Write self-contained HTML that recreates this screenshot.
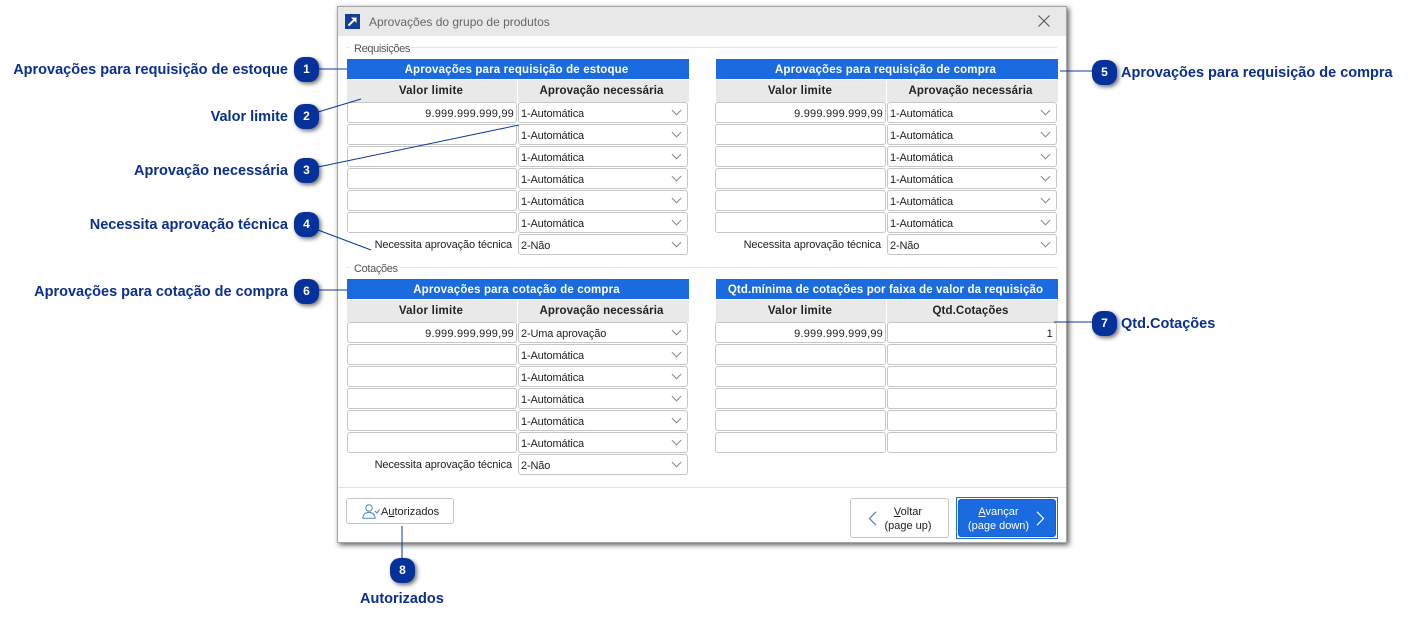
<!DOCTYPE html>
<html><head><meta charset="utf-8"><style>
html,body{margin:0;padding:0;background:#fff}
body{width:1409px;height:624px;position:relative;overflow:hidden;font-family:"Liberation Sans",sans-serif;font-size:11px;color:#222}
div,span.a{position:absolute;box-sizing:border-box}
#dlg{left:337px;top:6px;width:730px;height:537px;background:#fff;border:1px solid #a5a5a5;box-shadow:2px 2px 5px rgba(0,0,0,.65)}
.blue{background:#1a6ae0;color:#fff;font-weight:bold;text-align:center;height:20px;line-height:22px;width:342px;font-size:11.5px;letter-spacing:.16px;padding-right:3px}
.ch{background:#e9e9e9;font-weight:bold;text-align:center;height:22px;line-height:23px;color:#222;font-size:11.5px;letter-spacing:.1px}
.ch.c2{padding-right:4px}
.ch.v{letter-spacing:.25px;padding-right:2px}
.i,.s{height:21px;border:1px solid #c6c6c6;border-radius:3px;background:#fff;line-height:22px;white-space:nowrap}
.i{width:170px;text-align:right;padding-right:2px;letter-spacing:.2px}
.i.w{left:715px;width:171px}
.s{width:170px;padding-left:2px;letter-spacing:-.15px}
.s:after{content:"";position:absolute;right:7px;top:4px;width:6px;height:6px;border-right:1px solid #888;border-bottom:1px solid #888;transform:rotate(45deg)}
.lb{text-align:right;width:170px;height:21px;line-height:23px;padding-right:5px;white-space:nowrap;letter-spacing:-.12px}
.g{color:#555;background:#fff;padding:0 1px 0 4px;height:14px;line-height:16px;letter-spacing:-.35px}
.hr{height:1px;background:#e4e4e4}
.b{width:25px;height:25px;background:#04319a;border-radius:10px;color:#fff;font-weight:bold;font-size:12px;line-height:25px;text-align:center;box-shadow:2px 2px 4px rgba(0,0,0,.55)}
.t{color:#0b2f8f;font-weight:bold;font-size:14.5px;line-height:18px;height:18px;white-space:nowrap}
.r{right:1121px;text-align:right}
.btn{border:1px solid #c4c4c4;border-radius:3px;background:#fff;text-align:center;color:#222;font-size:11px}
u{text-decoration:underline}
</style></head><body>

<div id="dlg"></div>
<div style="left:338px;top:7px;width:728px;height:29px;background:#e8e8e8"></div>
<svg style="position:absolute;left:345px;top:14px" width="15" height="15" viewBox="0 0 15 15"><rect width="15" height="15" fill="#0f3f96"/><path d="M3.5 11.5 L10 5" stroke="#fff" stroke-width="2" fill="none"/><path d="M6 3.5 H11.5 V9 Z" fill="#fff"/></svg>
<div style="left:369px;top:14px;height:16px;line-height:17px;font-size:12px;color:#666;white-space:nowrap">Aprovações do grupo de produtos</div>
<svg style="position:absolute;left:1038px;top:15px" width="12" height="12" viewBox="0 0 12 12"><path d="M.5 .5 L11.5 11.5 M11.5 .5 L.5 11.5" stroke="#555" stroke-width="1.1" fill="none"/></svg>

<!-- Requisições -->
<div class="hr" style="left:347px;top:47px;width:710px"></div>
<div class="g" style="left:350px;top:41px">Requisições</div>

<div class="blue" style="left:347px;top:59px">Aprovações para requisição de estoque</div>
<div class="ch v" style="left:347px;top:80px;width:170px">Valor limite</div>
<div class="ch c2" style="left:518px;top:80px;width:171px">Aprovação necessária</div>
<div class="i" style="left:347px;top:102px">9.999.999.999,99</div><div class="s" style="left:518px;top:102px">1-Automática</div>
<div class="i" style="left:347px;top:124px"></div><div class="s" style="left:518px;top:124px">1-Automática</div>
<div class="i" style="left:347px;top:146px"></div><div class="s" style="left:518px;top:146px">1-Automática</div>
<div class="i" style="left:347px;top:168px"></div><div class="s" style="left:518px;top:168px">1-Automática</div>
<div class="i" style="left:347px;top:190px"></div><div class="s" style="left:518px;top:190px">1-Automática</div>
<div class="i" style="left:347px;top:212px"></div><div class="s" style="left:518px;top:212px">1-Automática</div>
<div class="lb" style="left:347px;top:234px">Necessita aprovação técnica</div><div class="s" style="left:518px;top:234px">2-Não</div>

<div class="blue" style="left:716px;top:59px">Aprovações para requisição de compra</div>
<div class="ch v" style="left:716px;top:80px;width:170px">Valor limite</div>
<div class="ch c2" style="left:887px;top:80px;width:171px">Aprovação necessária</div>
<div class="i w" style="top:102px">9.999.999.999,99</div><div class="s" style="left:887px;top:102px">1-Automática</div>
<div class="i w" style="top:124px"></div><div class="s" style="left:887px;top:124px">1-Automática</div>
<div class="i w" style="top:146px"></div><div class="s" style="left:887px;top:146px">1-Automática</div>
<div class="i w" style="top:168px"></div><div class="s" style="left:887px;top:168px">1-Automática</div>
<div class="i w" style="top:190px"></div><div class="s" style="left:887px;top:190px">1-Automática</div>
<div class="i w" style="top:212px"></div><div class="s" style="left:887px;top:212px">1-Automática</div>
<div class="lb" style="left:716px;top:234px">Necessita aprovação técnica</div><div class="s" style="left:887px;top:234px">2-Não</div>

<!-- Cotações -->
<div class="hr" style="left:347px;top:267px;width:710px"></div>
<div class="g" style="left:350px;top:261px">Cotações</div>

<div class="blue" style="left:347px;top:279px">Aprovações para cotação de compra</div>
<div class="ch v" style="left:347px;top:300px;width:170px">Valor limite</div>
<div class="ch c2" style="left:518px;top:300px;width:171px">Aprovação necessária</div>
<div class="i" style="left:347px;top:322px">9.999.999.999,99</div><div class="s" style="left:518px;top:322px">2-Uma aprovação</div>
<div class="i" style="left:347px;top:344px"></div><div class="s" style="left:518px;top:344px">1-Automática</div>
<div class="i" style="left:347px;top:366px"></div><div class="s" style="left:518px;top:366px">1-Automática</div>
<div class="i" style="left:347px;top:388px"></div><div class="s" style="left:518px;top:388px">1-Automática</div>
<div class="i" style="left:347px;top:410px"></div><div class="s" style="left:518px;top:410px">1-Automática</div>
<div class="i" style="left:347px;top:432px"></div><div class="s" style="left:518px;top:432px">1-Automática</div>
<div class="lb" style="left:347px;top:454px">Necessita aprovação técnica</div><div class="s" style="left:518px;top:454px">2-Não</div>

<div class="blue" style="left:716px;top:279px;letter-spacing:.12px">Qtd.mínima de cotações por faixa de valor da requisição</div>
<div class="ch v" style="left:716px;top:300px;width:170px">Valor limite</div>
<div class="ch c2" style="left:887px;top:300px;width:171px">Qtd.Cotações</div>
<div class="i w" style="top:322px">9.999.999.999,99</div><div class="i" style="left:887px;top:322px;padding-right:3px">1</div>
<div class="i w" style="top:344px"></div><div class="i" style="left:887px;top:344px"></div>
<div class="i w" style="top:366px"></div><div class="i" style="left:887px;top:366px"></div>
<div class="i w" style="top:388px"></div><div class="i" style="left:887px;top:388px"></div>
<div class="i w" style="top:410px"></div><div class="i" style="left:887px;top:410px"></div>
<div class="i w" style="top:432px"></div><div class="i" style="left:887px;top:432px"></div>

<!-- Footer -->
<div class="hr" style="left:338px;top:487px;width:728px"></div>
<div class="btn" style="left:346px;top:498px;width:108px;height:26px;line-height:26px;padding-left:34px;text-align:left">A<u>u</u>torizados</div>
<svg style="position:absolute;left:362px;top:504px" width="18" height="15" viewBox="0 0 18 15"><circle cx="7" cy="4" r="3.2" fill="none" stroke="#4a86dc" stroke-width="1"/><path d="M.8 14.2 C1 10 4 8.4 7 8.4 C10 8.4 12.6 10 13.2 14.2 Z" fill="none" stroke="#4a86dc" stroke-width="1"/><path d="M13 7 L14.8 9 L17.6 5.6" fill="none" stroke="#777" stroke-width="1"/></svg>

<div class="btn" style="left:850px;top:498px;width:99px;height:40px;padding:6px 0 0 17px;line-height:14px"><u>V</u>oltar<br>(page up)</div>
<svg style="position:absolute;left:868px;top:511px" width="10" height="15" viewBox="0 0 10 15"><path d="M8 .8 L1.5 7.5 L8 14.2" fill="none" stroke="#3f80df" stroke-width="1.2"/></svg>

<div style="left:956px;top:497px;width:102px;height:42px;border:1px solid #1a6ae0;background:#fff"></div>
<div class="btn" style="left:958px;top:499px;width:98px;height:38px;background:#1a6ae0;border-color:#1a5cc0;color:#fff;padding:5px 17px 0 0;line-height:14px"><u>A</u>vançar<br>(page down)</div>
<svg style="position:absolute;left:1035px;top:511px" width="10" height="15" viewBox="0 0 10 15"><path d="M2 .8 L8.5 7.5 L2 14.2" fill="none" stroke="#fff" stroke-width="1.2"/></svg>

<!-- Leader lines -->
<svg style="position:absolute;left:0;top:0" width="1409" height="624" viewBox="0 0 1409 624">
<g stroke="#0a3a9c" stroke-width="1" fill="none">
<path d="M318 69H347"/><path d="M318 112L361 99"/><path d="M318 167L519 125"/><path d="M318 230L371 250"/>
<path d="M1060 71H1092"/><path d="M318 290H347"/><path d="M1054 322H1092"/><path d="M402 526V558"/>
</g></svg>

<!-- Callouts -->
<div class="b" style="left:294px;top:57px">1</div>
<div class="b" style="left:294px;top:104px">2</div>
<div class="b" style="left:294px;top:158px">3</div>
<div class="b" style="left:294px;top:212px">4</div>
<div class="b" style="left:1092px;top:60px">5</div>
<div class="b" style="left:294px;top:279px">6</div>
<div class="b" style="left:1092px;top:311px">7</div>
<div class="b" style="left:390px;top:558px">8</div>

<div class="t r" style="top:61px">Aprovações para requisição de estoque</div>
<div class="t r" style="top:108px">Valor limite</div>
<div class="t r" style="top:162px">Aprovação necessária</div>
<div class="t r" style="top:216px">Necessita aprovação técnica</div>
<div class="t" style="left:1121px;top:64px">Aprovações para requisição de compra</div>
<div class="t r" style="top:283px">Aprovações para cotação de compra</div>
<div class="t" style="left:1121px;top:315px">Qtd.Cotações</div>
<div class="t" style="left:360px;top:590px">Autorizados</div>
</body></html>
